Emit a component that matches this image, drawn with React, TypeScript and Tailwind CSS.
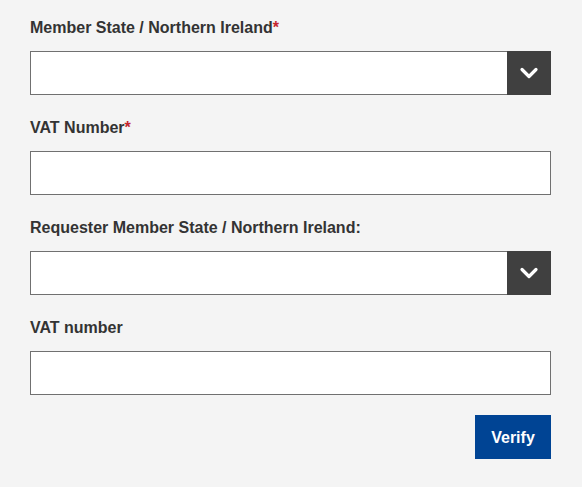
import { useState } from 'react'

function Label({ text, required }: { text: string; required?: boolean }) {
  return (
    <label className="block h-6 text-[16px] leading-6 font-bold text-[#333333] mb-3 pt-px">
      {text}
      {required && <span className="text-[#c4262e]">*</span>}
    </label>
  )
}

function SelectField() {
  return (
    <div className="flex h-11 bg-white border border-[#707070]">
      <div className="flex-1" />
      <div className="w-11 -my-px -mr-px flex items-center justify-center bg-[#404040]">
        <svg width="20" height="20" viewBox="0 0 20 20" fill="none">
          <path d="M3 6.5 L10 13.5 L17 6.5" stroke="#fff" strokeWidth="3.2" strokeLinecap="round" strokeLinejoin="round" />
        </svg>
      </div>
    </div>
  )
}

function TextField({ value, onChange }: { value: string; onChange: (v: string) => void }) {
  return (
    <input
      value={value}
      onChange={(e) => onChange(e.target.value)}
      className="block w-full h-11 bg-white border border-[#707070] px-3 outline-none"
    />
  )
}

export default function App() {
  const [vat, setVat] = useState('')
  const [reqVat, setReqVat] = useState('')

  return (
    <div className="min-h-[487px] bg-[#f4f4f4] pt-[15px] pl-[30px] pr-[31px] font-['Liberation_Sans',Arial,sans-serif]">
      <Label text="Member State / Northern Ireland" required />
      <SelectField />
      <div className="mt-5">
        <Label text="VAT Number" required />
        <TextField value={vat} onChange={setVat} />
      </div>
      <div className="mt-5">
        <Label text="Requester Member State / Northern Ireland:" />
        <SelectField />
      </div>
      <div className="mt-5">
        <Label text="VAT number" />
        <TextField value={reqVat} onChange={setReqVat} />
      </div>
      <div className="flex justify-end mt-5">
        <button className="h-11 w-[76px] bg-[#004494] text-white text-[16px] font-bold pt-px">Verify</button>
      </div>
    </div>
  )
}
